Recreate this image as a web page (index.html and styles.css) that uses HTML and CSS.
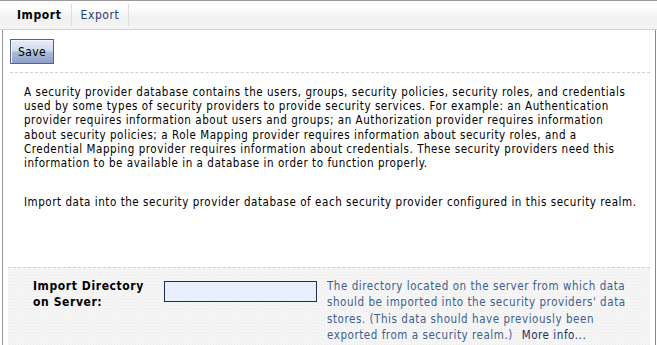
FILE: index.html
```html
<!DOCTYPE html>
<html lang="en">
<head>
    <meta charset="UTF-8">
    <title>Import</title>
    <link rel="stylesheet" href="styles.css">
</head>
<body>
    <div class="tabs">
        <span class="tab active">Import</span>
        <span class="tab">Export</span>
    </div>

    <div class="panel">
        <div class="toolbar">
            <button class="btn">Save</button>
        </div>

        <div class="intro">
            <p>A security provider database contains the users, groups, security policies, security roles, and credentials used by some types of security providers to provide security services. For example: an Authentication provider requires information about users and groups; an Authorization provider requires information about security policies; a Role Mapping provider requires information about security roles, and a Credential Mapping provider requires information about credentials. These security providers need this information to be available in a database in order to function properly.</p>
            <p class="note">Import data into the security provider database of each security provider configured in this security realm.</p>
        </div>

        <div class="field-row">
            <label class="field-label" for="dir">Import Directory on Server:</label>
            <div class="field-input">
                <input type="text" id="dir">
            </div>
            <div class="field-help">
                The directory located on the server from which data should be imported into the security providers' data stores. (This data should have previously been exported from a security realm.) <a href="#">More info...</a>
            </div>
        </div>
    </div>
</body>
</html>
```

FILE: styles.css
```css
body {
    margin: 0;
    background: #fff;
    font-family: "DejaVu Sans Condensed", "Liberation Sans", sans-serif;
    font-size: 11.5px;
    letter-spacing: 0.55px;
    color: #000;
}

/* tab strip */
.tabs {
    width: 655px;
    height: 28px;
    border-top: 1px solid #9a9a9a;
    border-right: 1px solid #8a8a8a;
    border-bottom: 1px solid #cfcfcf;
    background: linear-gradient(#fff 0%, #fff 20%, #f1f1f1 60%, #f4f4f4 100%);
    display: flex;
    align-items: center;
    padding-left: 8px;
    box-sizing: content-box;
}

.tab {
    padding: 0 9px;
    line-height: 22px;
    font-size: 12px;
    letter-spacing: 0.6px;
    color: #243f6e;
    border-right: 1px solid #ddd;
}

.tab.active {
    font-weight: bold;
    color: #000;
}

/* main panel */
.panel {
    margin-left: 2px;
    width: 652px;
    height: 315px;
    border-left: 1px solid #9a9a9a;
    border-right: 1px solid #8a8a8a;
    overflow: hidden;
}

.toolbar {
    margin: 0 5px 0 7px;
    padding: 9px 0 8px;
    border-bottom: 1px dashed #cfcfcf;
}

.btn {
    display: block;
    width: 44px;
    height: 25px;
    padding: 0;
    font-family: inherit;
    font-size: 12px;
    letter-spacing: 0.4px;
    color: #000;
    border: 1px solid #56627f;
    background: linear-gradient(#e8eef6 0%, #cfdcec 45%, #a9bcdc 55%, #8f9fc8 100%);
    box-shadow: inset 1px 1px 0 #f4f7fb;
}

.intro {
    padding: 12px 20px 0 21px;
    height: 182px;
    line-height: 14.2px;
}

.intro p {
    margin: 0 0 25px;
}

.intro p.note {
    white-space: nowrap;
}

/* form row */
.field-row {
    margin: 0 5px 0 5px;
    border-top: 1px dashed #cfcfcf;
    background-color: #f5f5f5;
    background-image: radial-gradient(#ececec 0.6px, transparent 0.8px);
    background-size: 3px 3px;
    display: grid;
    grid-template-columns: 131px 163px 1fr;
    padding: 10px 18px 20px 25px;
    line-height: 16.3px;
}

.field-label {
    font-weight: bold;
    font-size: 12px;
    letter-spacing: 0.6px;
}

.field-input input {
    box-sizing: border-box;
    width: 153px;
    height: 21px;
    margin-top: 3px;
    border: 1px solid #1e3050;
    background: #e8f0fd;
    font-family: inherit;
}

.field-help {
    color: #40608e;
}

.field-help a {
    color: #1c2f5e;
    text-decoration: none;
    margin-left: 5px;
}
```
